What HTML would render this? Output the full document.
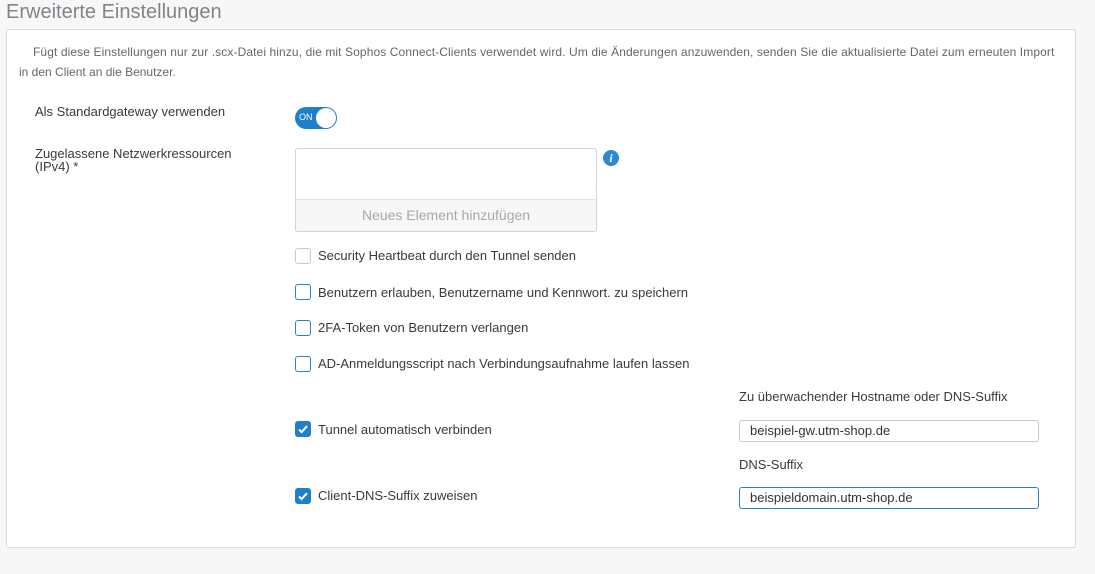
<!DOCTYPE html>
<html><head><meta charset="utf-8"><style>
body{margin:0;width:1095px;height:574px;background:#f7f7f7;font-family:"Liberation Sans Narrow","Liberation Sans",sans-serif;color:#333;position:relative;overflow:hidden}
.a{position:absolute;white-space:nowrap}
h1{position:absolute;left:6px;top:0;margin:0;font-weight:normal;font-size:20px;color:#80858b;line-height:24px}
.panel{position:absolute;left:6px;top:29px;width:1068px;height:517px;background:#fff;border:1px solid #dcdcdc;border-radius:2px}
.t{font-size:13px;color:#3a3a3a}
.cb{position:absolute;width:14px;height:14px;border:1.5px solid #2b80c5;border-radius:3px;background:#fff}
.cb.g{border-color:#c8c8c8}
.cb.on{background:#1f7fc9;border-color:#1f7fc9}
.inp{position:absolute;left:739px;width:288px;height:20px;border:1px solid #c9c9c9;border-radius:3px;background:#fff;font-size:13px;line-height:20px;padding-left:10px;box-sizing:content-box}
</style></head><body>
<h1>Erweiterte Einstellungen</h1>
<div class="panel"></div>
<div class="a" style="left:33px;top:45px;font-size:12px;color:#666;letter-spacing:0.1px">Fügt diese Einstellungen nur zur .scx-Datei hinzu, die mit Sophos Connect-Clients verwendet wird. Um die Änderungen anzuwenden, senden Sie die aktualisierte Datei zum erneuten Import</div>
<div class="a" style="left:19px;top:65px;font-size:12px;color:#666">in den Client an die Benutzer.</div>
<div class="a t" style="left:35px;top:104px">Als Standardgateway verwenden</div>
<div class="a" style="left:295px;top:107px;width:42px;height:22px;border-radius:11px;background:#1f7fc9">
<span style="position:absolute;left:4px;top:5px;font-size:9px;color:#fff;font-family:'Liberation Sans',sans-serif">ON</span>
<span style="position:absolute;right:1px;top:1px;width:20px;height:20px;border-radius:50%;background:#fff"></span></div>
<div class="a t" style="left:35px;top:147px;line-height:13px">Zugelassene Netzwerkressourcen<br>(IPv4) *</div>
<div class="a" style="left:295px;top:148px;width:300px;height:82px;border:1px solid #d4d4d4;border-radius:3px;background:#fff;overflow:hidden">
<div style="position:absolute;left:0;right:0;bottom:0;height:31px;background:#f7f7f7;border-top:1px solid #e3e3e3;text-align:center;line-height:31px;font-size:14px;color:#a8a8a8">Neues Element hinzufügen</div></div>
<div class="a" style="left:603px;top:150px;width:16px;height:16px;border-radius:50%;background:#2b8ad6;color:#fff;font:bold italic 12px/16px 'Liberation Serif',serif;text-align:center">i</div>
<div class="cb g" style="left:295px;top:248px"></div><div class="a t" style="left:318px;top:248px">Security Heartbeat durch den Tunnel senden</div>
<div class="cb" style="left:295px;top:284px"></div><div class="a t" style="left:318px;top:285px">Benutzern erlauben, Benutzername und Kennwort. zu speichern</div>
<div class="cb" style="left:295px;top:320px"></div><div class="a t" style="left:318px;top:320px">2FA-Token von Benutzern verlangen</div>
<div class="cb" style="left:295px;top:356px"></div><div class="a t" style="left:318px;top:356px">AD-Anmeldungsscript nach Verbindungsaufnahme laufen lassen</div>
<div class="a t" style="left:739px;top:389px">Zu überwachender Hostname oder DNS-Suffix</div>
<div class="cb on" style="left:295px;top:421px"><svg width="14" height="14" viewBox="0 0 14 14"><path d="M3 7.5l2.6 2.6L11 4.2" fill="none" stroke="#fff" stroke-width="2"/></svg></div>
<div class="a t" style="left:318px;top:422px">Tunnel automatisch verbinden</div>
<div class="inp" style="top:420px">beispiel-gw.utm-shop.de</div>
<div class="a t" style="left:739px;top:457px">DNS-Suffix</div>
<div class="cb on" style="left:295px;top:488px"><svg width="14" height="14" viewBox="0 0 14 14"><path d="M3 7.5l2.6 2.6L11 4.2" fill="none" stroke="#fff" stroke-width="2"/></svg></div>
<div class="a t" style="left:318px;top:488px">Client-DNS-Suffix zuweisen</div>
<div class="inp" style="top:487px;border-color:#2b80c5">beispieldomain.utm-shop.de</div>
</body></html>
